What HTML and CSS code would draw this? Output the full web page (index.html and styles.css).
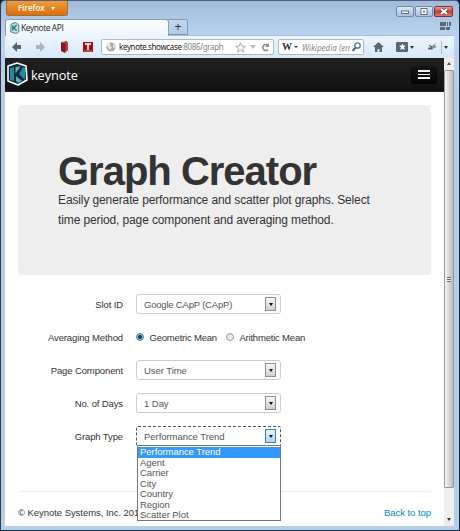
FILE: index.html
```html
<!DOCTYPE html>
<html lang="en">
<head>
<meta charset="utf-8">
<title>Keynote API</title>
<link rel="stylesheet" href="styles.css">
</head>
<body>
<div class="window">
  <header class="titlebar">
    <div class="firefox"><span>Firefox</span><i class="tri light"></i></div>
    <div class="controls">
      <span class="control"><svg width="18" height="9" viewBox="0 0 18 9"><rect x="5.5" y="4" width="7" height="2.5" fill="#fff" stroke="#657080"/></svg></span>
      <span class="control"><svg width="18" height="9" viewBox="0 0 18 9"><rect x="6" y="1.5" width="6" height="6" fill="#fff" stroke="#657080"/><rect x="8" y="3.5" width="2" height="2" fill="#758396"/></svg></span>
      <span class="control close"><svg width="18" height="9" viewBox="0 0 18 9"><path d="M6 2l6 5M12 2L6 7" stroke="#684047" stroke-width="3.5"/><path d="M6 2l6 5M12 2L6 7" stroke="#fff" stroke-width="2"/></svg></span>
    </div>
  </header>
  <div class="tabs">
    <div class="tab">
      <svg width="11" height="12" viewBox="0 0 22 28"><path d="M3 5L14 1l7 6v16l-6 4-13-4z" fill="#b9dfe2" stroke="#39727a" stroke-width="2"/><path d="M7 8v12M16 7L9 14l7 6" fill="none" stroke="#16758b" stroke-width="3"/></svg>
      <span>Keynote API</span>
    </div>
    <div class="newtab">+</div>
    <svg class="groups" width="11" height="10" viewBox="0 0 11 10"><path fill="#5c6873" d="M0 1h6v4H0zM7 1h1v4H7zM9 1h2v4H9zM0 6h5v3H0zM6 6h4v3H6z"/></svg>
  </div>
  <nav class="toolbar">
    <svg class="back" width="10" height="10" viewBox="0 0 10 10"><path d="M5 0v3h4v4H5v3L0 5z" fill="#536371"/></svg>
    <svg class="forward" width="10" height="10" viewBox="0 0 10 10"><path d="M4 0v3H0v4h4v3l5-5z" fill="#a9b6c2"/></svg>
    <svg class="book" width="9" height="12" viewBox="0 0 9 12"><path d="M0 1l4 1v10l-4-2z" fill="#8c1720"/><path d="M1 1l5-1v9l-2 3V2z" fill="#a63239"/><path d="M5 2l2-1v8l-2 2z" fill="#bc3c43"/></svg>
    <svg class="tbook" width="10" height="12" viewBox="0 0 10 12"><path d="M0 1h10v10H0z" fill="#96121c"/><path d="M1 10h8" stroke="#d1777d"/><path d="M2 3h6M5 3v6" stroke="#fff" stroke-width="1.5"/></svg>
    <div class="address">
      <svg width="10" height="10" viewBox="0 0 10 10"><circle cx="5" cy="5" r="4.5" fill="#aaa"/><path d="M2 1l3 1-1 2 2 1-2 3-2-3-1-2zM7 2l2 2-1 3-1-2z" fill="#e9e9e9"/></svg>
      <span class="url">keynote.showcase<span>:8086/graph</span></span>
      <svg class="star" width="11" height="11" viewBox="0 0 11 11"><path d="M5.5.8L6.8 4l3.5.3-2.7 2.2.9 3.6-3-2-3 2 .9-3.6L.7 4.3 4.2 4z" fill="#fff" stroke="#aaa"/></svg>
      <i class="tri gray"></i>
      <svg class="reload" width="9" height="9" viewBox="0 0 9 9"><path d="M7 2.5A3 3 0 1 0 7 6.5" fill="none" stroke="#848b91" stroke-width="1.5"/><path d="M8 0v4H4z" fill="#848b91"/></svg>
    </div>
    <div class="search">
      <b>W</b><i class="tri small"></i><span>Wikipedia (en</span>
      <svg width="9" height="10" viewBox="0 0 9 10"><circle cx="5.5" cy="3.5" r="2.7" fill="#fff" stroke="#3977b5" stroke-width="1.3"/><path d="M3.5 5.5L.7 9" stroke="#285d96" stroke-width="2"/></svg>
    </div>
    <svg class="home" width="11" height="10" viewBox="0 0 11 10"><path d="M5.5 0L11 5H9v5H6.5V7h-2v3H2V5H0z" fill="#5b6673"/></svg>
    <svg class="bookmark" width="12" height="10" viewBox="0 0 12 10"><rect width="12" height="10" rx="1" fill="#586777"/><path d="M6.5 1.5l1 2 2.5.2-2 1.6.7 2.7-2.2-1.3L4.3 8 5 5.3 3 3.7l2.5-.2z" fill="#fff"/></svg>
    <i class="tri bookmark-tri"></i>
    <svg class="fly" width="10" height="9" viewBox="0 0 10 9"><path d="M1 4l4-1 4-3-1 3 2 1-3 1-2 2-4-1 2-1z" fill="#8c9092"/><path d="M1 6l4-1M2 2l3 2" stroke="#45494c"/></svg>
    <i class="divider"></i><i class="tri end"></i>
  </nav>
  <div class="viewport">
    <main class="page">
      <div class="navbar">
        <svg width="22" height="25" viewBox="0 0 22 25"><path d="M2 4L11 1l9 3 1 14-9 5-10-4z" fill="#102e37" stroke="#fff" stroke-width="1.6" stroke-linejoin="round"/><path d="M4 6l4-1v14l-4-1z" fill="#2f8496"/><path d="M9.500 5l5-.5-5 7z" fill="#65b4c2"/><path d="M17 5l2 1v12l-6-6z" fill="#248ba7"/><path d="M10 14l6 5-4 2-2-2z" fill="#54b2c8"/></svg>
        <span class="brand">keynote<sup>·</sup></span>
        <div class="menu"><i></i><i></i><i></i></div>
      </div>
      <section class="hero">
        <h1>Graph Creator</h1>
        <p>Easily generate performance and scatter plot graphs. Select<br>time period, page component and averaging method.</p>
      </section>
      <form class="form">
        <div class="row"><label>Slot ID</label><div class="select"><span class="tight">Google CApP (CApP)</span><i class="arrow"></i></div></div>
        <div class="row"><label>Averaging Method</label><div class="radios"><i class="radio checked"></i><span>Geometric Mean</span><i class="radio"></i><span>Arithmetic Mean</span></div></div>
        <div class="row"><label>Page Component</label><div class="select"><span>User Time</span><i class="arrow"></i></div></div>
        <div class="row"><label>No. of Days</label><div class="select"><span>1 Day</span><i class="arrow"></i></div></div>
        <div class="row"><label>Graph Type</label><div class="select open"><span>Performance Trend</span><i class="arrow"></i>
          <div class="options"><div class="selected">Performance Trend</div><div>Agent</div><div>Carrier</div><div>City</div><div>Country</div><div>Region</div><div>Scatter Plot</div></div>
        </div></div>
      </form>
      <footer><span>© Keynote Systems, Inc. 201</span><a>Back to top</a></footer>
    </main>
    <aside class="scrollbar"><i class="up"></i><div class="thumb"><i></i></div><i class="down"></i></aside>
  </div>
</div>
</body>
</html>
```
FILE: styles.css
```css
* { box-sizing: border-box; }
body { margin: 0; width: 460px; height: 531px; overflow: hidden; background: #09293b; font-family: "Liberation Sans", Arial, sans-serif; color: #333; }
svg { display: block; flex: none; }
.window { width: 460px; height: 531px; border: 1px solid #0c3145; border-left-color: #35394b; border-top-color: #555e79; border-radius: 5px 5px 0 0; padding: 0 5px 4px 4px; background: linear-gradient(#a0bbda, #bbd4f0 36px, #b8cee7 90px, #b8cee7); display: flex; flex-direction: column; }
.titlebar { height: 18px; display: flex; justify-content: space-between; }
.firefox { width: 62px; height: 15px; margin-left: 1px; background: linear-gradient(#ee9b3b, #df6f0c); border: 1px solid #9e703f; border-top: 0; border-radius: 0 0 3px 3px; color: #fff; font: 600 8px/14px "Open Sans", sans-serif; display: flex; align-items: center; padding-left: 11px; gap: 6px; }
.tri { width: 0; height: 0; border: solid transparent; border-width: 3px 2.5px 0; border-top-color: #303942; flex: none; }
.tri.light { border-top-color: #fff; border-width: 3px 2px 0; }
.controls { display: flex; gap: 1px; margin-top: 5px; margin-right: 1px; }
.control { width: 18px; height: 11px; border: 1px solid #7588a3; border-radius: 2px; background: linear-gradient(#dce9f8, #a7c0de); display: flex; align-items: center; justify-content: center; overflow: hidden; }
.control.close { width: 19px; border-color: #81303a; background: linear-gradient(#e4a09b, #c23e36 50%, #d57a68); }
.tabs { height: 17px; display: flex; border-bottom: 1px solid #a9bfd6; }
.tab { width: 164px; height: 17px; background: linear-gradient(#fcfeff, #edf5fd); border: 1px solid #8aa0b7; border-bottom: 0; border-radius: 3px 3px 0 0; display: flex; align-items: center; gap: 1px; padding-left: 3px; color: #161d25; font: 8.4px/16px "Open Sans", sans-serif; letter-spacing: -.4px; }
.newtab { width: 19px; height: 16px; border: 1px solid #8299b1; border-left: 0; background: linear-gradient(#c6d9ee, #b4cae1); border-radius: 0 3px 0 0; font: 12px/14px "Liberation Sans", sans-serif; text-align: center; color: #26313d; }
.groups { margin-left: auto; margin-right: 3px; margin-top: 2px; }
.toolbar { height: 22px; display: flex; align-items: center; background: linear-gradient(#edf5fd, #d8e7f7); font-family: "Noto Sans", sans-serif; flex: none; }
.back { margin-left: 7px; }
.forward { margin-left: 14px; }
.book { margin-left: 15px; }
.tbook { margin-left: 13px; }
.address, .search { height: 16px; background: #fff; border: 1px solid #acb9c7; border-radius: 2px; display: flex; align-items: center; }
.address { width: 173px; margin-left: 8px; padding-left: 4px; }
.url { font-size: 8px; line-height: 14px; letter-spacing: -.37px; margin-left: 3px; color: #17191b; white-space: nowrap; width: 108px; }
.url span { color: #858585; }
.star { margin-left: 8px; }
.gray { margin-left: 4px; border-width: 4px 3px 0; border-top-color: #bbb; }
.reload { margin-left: 5px; }
.search { width: 86px; margin-left: 4px; padding-left: 3px; color: #888; font-size: 8px; white-space: nowrap; }
.search b { font: bold 10px/14px "Liberation Serif", serif; color: #303336; }
.search .small { margin-left: 2px; border-width: 2px 2px 0; }
.search span { font-style: italic; margin-left: 4px; width: 48px; overflow: hidden; }
.search svg { margin-left: 2px; }
.home { margin-left: 9px; }
.bookmark { margin-left: 12px; }
.bookmark-tri { margin-left: 2px; }
.fly { margin-left: 13px; }
.divider { height: 13px; width: 1px; background: #abbdd0; margin-left: 4px; }
.end { margin-left: 2px; }
.viewport { flex: 1; min-height: 0; display: flex; }
.page { width: 439px; background: #fff; flex: none; }
.navbar { height: 34px; background: linear-gradient(#222, #111); display: flex; align-items: center; padding: 0 7px 0 1px; border-bottom: 1px solid #252525; }
.brand { color: #fff; font: 12.8px/20px "Open Sans", sans-serif; margin-left: 3px; white-space: nowrap; letter-spacing: -.1px; }
.brand sup { font-size: 5px; line-height: 1px; }
.menu { margin-left: auto; width: 26px; height: 18px; background: linear-gradient(#151515, #050505); border-radius: 3px; display: flex; flex-direction: column; align-items: center; justify-content: center; gap: 2px; }
.menu i { width: 12px; height: 1.5px; background: #f2f2f2; }
.hero { margin: 13px 13px 0; height: 170px; border-radius: 4px; background: #eee; padding: 46px 0 0 40px; }
h1 { margin: 0; font-size: 40px; line-height: 40px; letter-spacing: -1px; white-space: nowrap; }
p { margin: 0; font-size: 12px; line-height: 19.5px; letter-spacing: -.12px; white-space: nowrap; }
.form { margin-top: 19px; }
.row { height: 20px; margin-bottom: 13px; display: flex; align-items: center; font-size: 9.5px; }
.row label { width: 118px; text-align: right; margin-right: 13px; white-space: nowrap; letter-spacing: -.12px; }
.select { width: 145px; height: 20px; border: 1px solid #ccc; border-radius: 3px; padding: 0 4px 0 7px; display: flex; align-items: center; justify-content: space-between; color: #555; position: relative; white-space: nowrap; letter-spacing: -.05px; }
.tight { letter-spacing: -.2px; }
.arrow { width: 11px; height: 14px; border: 1px solid #8e8e8e; background: linear-gradient(#f6f6f6, #cfcfcf); display: flex; align-items: center; justify-content: center; }
.arrow::after { content: ""; border: solid transparent; border-width: 3px 2.5px 0; border-top-color: #111; }
.radios { display: flex; align-items: center; white-space: nowrap; letter-spacing: -.2px; }
.radio { width: 8px; height: 8px; border: 1px solid #989898; border-radius: 50%; background: #e8e8e8; }
.radio.checked { border-color: #58788a; background: radial-gradient(circle, #123d60 0 1.5px, #8acced 2.5px); }
.radios span { margin-left: 5.5px; }
.radios span + .radio { margin-left: 9px; }
.select.open { border: 1px dashed #555; border-radius: 2px; }
.open .arrow { background: linear-gradient(#e4f5fd, #a6d8f0); border-color: #4682a3; }
.options { position: absolute; left: 0; top: 18px; width: 144px; height: 76px; border: 1px solid #777; background: #fff; z-index: 2; line-height: 10.5px; padding-top: 1px; }
.options div { height: 10.5px; padding-left: 2px; }
.options .selected { background: #39f; color: #fff; }
footer { margin: 45px 13px 0; height: 34px; border-top: 1px solid #eee; display: flex; justify-content: space-between; padding-top: 15px; font-size: 9.5px; line-height: 12px; letter-spacing: -.05px; white-space: nowrap; }
footer a { color: #08c; }
.scrollbar { width: 10px; background: #eee; display: flex; flex-direction: column; align-items: center; }
.up { border: solid transparent; border-width: 0 2px 3px; border-bottom-color: #555; margin-top: 4px; }
.thumb { margin-top: 5px; width: 10px; height: 418px; border: 1px solid #999; background: linear-gradient(90deg, #f5f5f5, #bcbcc2); border-radius: 1px; display: flex; align-items: center; justify-content: center; }
.thumb i { width: 4px; height: 5px; background: repeating-linear-gradient(#666 0 1px, #eee 1px 2px); }
.down { border: solid transparent; border-width: 3px 2px 0; border-top-color: #333; margin-top: auto; margin-bottom: 5px; }
```
